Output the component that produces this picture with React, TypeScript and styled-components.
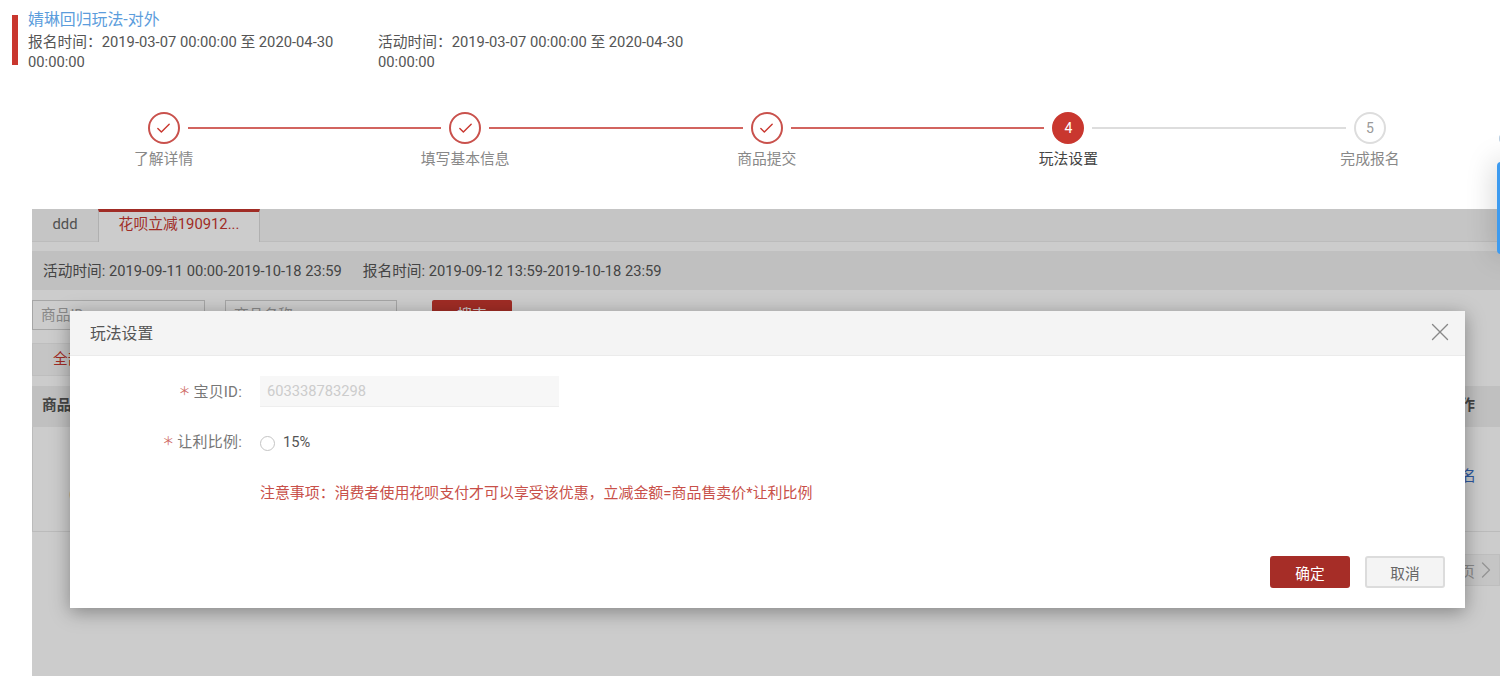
import React from "react";
import styled, { createGlobalStyle } from "styled-components";
import { Check, X, ChevronRight } from "lucide-react";

const FONT = `Roboto, "Noto Sans CJK SC", "Liberation Sans", sans-serif`;

const Global = createGlobalStyle`
  html, body { margin: 0; padding: 0; background: #fff; overflow: hidden; }
  body { font-family: ${FONT}; font-size: 14.7px; color: #555; }
  * { box-sizing: border-box; }
`;

const Page = styled.div`
  position: relative;
  width: 1500px;
  height: 676px;
  overflow: hidden;
  display: flex;
  flex-direction: column;
`;

const Header = styled.header`
  display: flex;
  padding: 10px 0 0 12px;
  gap: 10px;
  height: 72px;
`;
const RedBar = styled.div`
  width: 6px;
  height: 50px;
  margin-top: 5px;
  background: #c9372f;
`;
const HeaderText = styled.div`
  display: flex;
  flex-direction: column;
  gap: 2px;
`;
const Title = styled.div`
  color: #5c9ddc;
  font-size: 15.9px;
  line-height: 20px;
`;
const TimeRow = styled.div`
  display: flex;
`;
const TimeCol = styled.div`
  width: 350px;
  padding-right: 40px;
  line-height: 20px;
  font-size: 14.75px;
  color: #555;
`;

const Steps = styled.div`
  display: grid;
  grid-template-columns: repeat(5, 301.6px);
  margin: 40px 0 40px 12.8px;
`;
const Step = styled.div`
  display: flex;
  flex-direction: column;
  align-items: center;
`;
const Track = styled.div`
  display: flex;
  width: 100%;
  align-items: center;
  gap: 8px;
`;
const Rail = styled.div<{ $c: string }>`
  flex: 1;
  height: 2px;
  background: ${(p) => p.$c};
`;
const Circle = styled.div<{ $state: string }>`
  width: 32px;
  height: 32px;
  border-radius: 50%;
  display: flex;
  align-items: center;
  justify-content: center;
  font-size: 14px;
  border: 2px solid ${(p) => (p.$state === "todo" ? "#ddd" : p.$state === "active" ? "#c9372f" : "#c9514c")};
  background: ${(p) => (p.$state === "active" ? "#c9372f" : "#fff")};
  color: ${(p) => (p.$state === "active" ? "#fff" : p.$state === "todo" ? "#999" : "#c9372f")};
`;
const StepLabel = styled.div<{ $active: boolean }>`
  margin-top: 5px;
  line-height: 20px;
  font-size: 14.8px;
  color: ${(p) => (p.$active ? "#444" : "#888")};
`;

const Panel = styled.section`
  position: relative;
  margin-left: 32px;
  flex: 1;
  overflow: hidden;
`;
const Tabs = styled.div`
  display: flex;
  height: 33px;
  background: #f7f7f7;
  border-bottom: 1px solid #ebebeb;
`;
const Tab = styled.div<{ $active?: boolean }>`
  width: ${(p) => (p.$active ? "162px" : "66px")};
  height: ${(p) => (p.$active ? "33px" : "32px")};
  display: flex;
  align-items: center;
  justify-content: center;
  padding-bottom: ${(p) => (p.$active ? "9px" : "2px")};
  font-size: 14.8px;
  color: ${(p) => (p.$active ? "#c9372f" : "#666")};
  background: ${(p) => (p.$active ? "#fff" : "transparent")};
  border-top: ${(p) => (p.$active ? "3px solid #c9372f" : "0")};
  border-left: ${(p) => (p.$active ? "1px solid #ddd" : "0")};
  border-right: ${(p) => (p.$active ? "1px solid #ddd" : "0")};
`;
const InfoBar = styled.div`
  margin-top: 9px;
  height: 39px;
  background: #f0f0f0;
  display: flex;
  align-items: center;
  gap: 21px;
  padding: 0 0 2px 11px;
  font-size: 14.7px;
  color: #555;
`;
const Search = styled.div`
  display: flex;
  margin-top: 10px;
  height: 30px;
`;
const Field = styled.div<{ $w: number; $mr: number }>`
  width: ${(p) => p.$w}px;
  height: 30px;
  margin-right: ${(p) => p.$mr}px;
  border: 1px solid #d0d0d0;
  padding-left: 8px;
  font-size: 14.7px;
  line-height: 28px;
  color: #aaa;
`;
const SearchBtn = styled.div`
  width: 80px;
  height: 30px;
  background: #c9372f;
  color: #fff;
  border-radius: 2px;
  text-align: center;
  line-height: 30px;
`;
const FilterTab = styled.div`
  margin-top: 13px;
  width: 80px;
  height: 33px;
  border: 1px solid #eee;
  background: #f7f7f7;
  color: #c9372f;
  padding-left: 20px;
  line-height: 31px;
`;
const TableHead = styled.div`
  margin-top: 10px;
  height: 41px;
  background: #f0f0f0;
  display: flex;
  justify-content: space-between;
  align-items: center;
  padding: 0 25px 6px 10px;
  font-weight: 700;
  color: #555;
`;
const TableRow = styled.div`
  height: 105px;
  border: solid #eaeaea;
  border-width: 0 0 1px 1px;
  display: flex;
  justify-content: space-between;
  align-items: center;
  padding: 0 24px 10px 36px;
`;
const RowText = styled.div`
  line-height: 20px;
  padding-top: 40px;
`;
const RowLink = styled.div`
  color: #3a70c9;
`;
const Pager = styled.div`
  margin: 22px 0 0 auto;
  width: 120px;
  height: 32px;
  background: #f7f7f7;
  border: 1px solid #eee;
  display: flex;
  align-items: center;
  justify-content: flex-end;
  color: #aaa;
`;
const PagerArrow = styled(ChevronRight)`
  margin-left: -3px;
  margin-right: -1px;
  color: #bbb;
  flex: none;
`;

const Overlay = styled.div`
  position: absolute;
  inset: 0;
  background: rgba(0, 0, 0, 0.2);
`;
const Modal = styled.div`
  position: absolute;
  left: 38px;
  top: 102px;
  width: 1395px;
  height: 297px;
  display: flex;
  flex-direction: column;
  background: #fff;
  box-shadow: 0 4px 18px rgba(0, 0, 0, 0.35);
`;
const ModalHead = styled.div`
  height: 45px;
  background: #f4f4f4;
  border-bottom: 1px solid #ebebeb;
  display: flex;
  align-items: center;
  justify-content: space-between;
  padding: 0 10px 2px 20px;
  font-size: 15.8px;
  color: #555;
`;
const ModalBody = styled.div`
  padding-top: 20px;
  display: flex;
  flex-direction: column;
  gap: 20px;
`;
const FormRow = styled.div`
  display: grid;
  grid-template-columns: 172px 1fr;
  column-gap: 18px;
  align-items: center;
`;
const Label = styled.div`
  display: flex;
  justify-content: flex-end;
  align-items: center;
  color: #777;
  font-size: 15px;
  letter-spacing: 0.2px;
  padding-bottom: 3px;
`;
const Star = styled.span`
  color: #cf6a65;
  font-size: 12px;
  width: 12px;
  margin-right: 3px;
  text-align: center;
`;
const ReadOnly = styled.div`
  width: 299px;
  height: 31px;
  background: #f7f7f7;
  border-bottom: 1px solid #eee;
  padding-left: 7px;
  line-height: 30px;
  color: #ccc;
  font-size: 14.7px;
`;
const RadioWrap = styled.div`
  display: flex;
  align-items: center;
  gap: 8px;
  height: 30px;
  font-size: 14.7px;
  color: #555;
`;
const Radio = styled.span`
  width: 15px;
  height: 15px;
  border-radius: 50%;
  border: 1px solid #c4c4c4;
  margin-top: 2px;
`;
const Note = styled.div`
  margin: 26px 0 0 190px;
  line-height: 20px;
  color: #c85049;
  font-size: 14.95px;
`;
const ModalFoot = styled.div`
  margin-top: auto;
  padding: 0 20px 20px 0;
  display: flex;
  justify-content: flex-end;
  gap: 15px;
`;
const Button = styled.div<{ $primary?: boolean }>`
  width: 80px;
  height: 32px;
  border-radius: 3px;
  display: flex;
  align-items: center;
  justify-content: center;
  font-size: 14.7px;
  background: ${(p) => (p.$primary ? "#a62d27" : "#f4f4f4")};
  color: ${(p) => (p.$primary ? "#fff" : "#666")};
  border: ${(p) => (p.$primary ? "0" : "2px solid #dcdcdc")};
`;

const FloatTab = styled.div`
  position: absolute;
  left: 1497px;
  top: 162px;
  width: 20px;
  height: 92px;
  border-radius: 4px;
  background: #3d9bf0;
  box-shadow: 0 0 30px rgba(0, 0, 0, 0.22);
`;
const FloatDot = styled.div`
  position: absolute;
  left: 1499px;
  top: 134px;
  width: 12px;
  height: 9px;
  border-radius: 4px;
  background: #b9cfe2;
`;

const steps = [
  { label: "了解详情", state: "done" },
  { label: "填写基本信息", state: "done" },
  { label: "商品提交", state: "done" },
  { label: "玩法设置", state: "active" },
  { label: "完成报名", state: "todo" },
];

const DONE_RAIL = "#d2645f";

export default function App() {
  return (
    <Page>
      <Global />
      <Header>
        <RedBar />
        <HeaderText>
          <Title>婧琳回归玩法-对外</Title>
          <TimeRow>
            <TimeCol>报名时间：2019-03-07 00:00:00 至 2020-04-30 00:00:00</TimeCol>
            <TimeCol>活动时间：2019-03-07 00:00:00 至 2020-04-30 00:00:00</TimeCol>
          </TimeRow>
        </HeaderText>
      </Header>
      <Steps>
        {steps.map((s, i) => (
          <Step key={s.label}>
            <Track>
              <Rail $c={i === 0 ? "transparent" : s.state === "todo" ? "#ddd" : DONE_RAIL} />
              <Circle $state={s.state}>
                {s.state === "done" ? <Check size={17} strokeWidth={2} /> : i + 1}
              </Circle>
              <Rail $c={i === 4 ? "transparent" : s.state === "done" ? DONE_RAIL : "#ddd"} />
            </Track>
            <StepLabel $active={s.state === "active"}>{s.label}</StepLabel>
          </Step>
        ))}
      </Steps>
      <Panel>
        <Tabs>
          <Tab>ddd</Tab>
          <Tab $active>花呗立减190912...</Tab>
        </Tabs>
        <InfoBar>
          <span>活动时间: 2019-09-11 00:00-2019-10-18 23:59</span>
          <span>报名时间: 2019-09-12 13:59-2019-10-18 23:59</span>
        </InfoBar>
        <Search>
          <Field $w={173} $mr={20}>商品ID</Field>
          <Field $w={172} $mr={35}>商品名称</Field>
          <SearchBtn>搜索</SearchBtn>
        </Search>
        <FilterTab>全部</FilterTab>
        <TableHead>
          <span>商品信息</span>
          <span>操作</span>
        </TableHead>
        <TableRow>
          <RowText>(603338783298)</RowText>
          <RowLink>报名</RowLink>
        </TableRow>
        <Pager>
          下一页
          <PagerArrow size={28} strokeWidth={1.2} />
        </Pager>
        <Overlay />
        <Modal>
          <ModalHead>
            玩法设置
            <X size={30} strokeWidth={1.1} color="#888" />
          </ModalHead>
          <ModalBody>
            <FormRow>
              <Label>
                <Star>＊</Star>宝贝ID:
              </Label>
              <ReadOnly>603338783298</ReadOnly>
            </FormRow>
            <FormRow>
              <Label>
                <Star>＊</Star>让利比例:
              </Label>
              <RadioWrap>
                <Radio />
                15%
              </RadioWrap>
            </FormRow>
          </ModalBody>
          <Note>注意事项：消费者使用花呗支付才可以享受该优惠，立减金额=商品售卖价*让利比例</Note>
          <ModalFoot>
            <Button $primary>确定</Button>
            <Button>取消</Button>
          </ModalFoot>
        </Modal>
      </Panel>
      <FloatDot />
      <FloatTab />
    </Page>
  );
}
